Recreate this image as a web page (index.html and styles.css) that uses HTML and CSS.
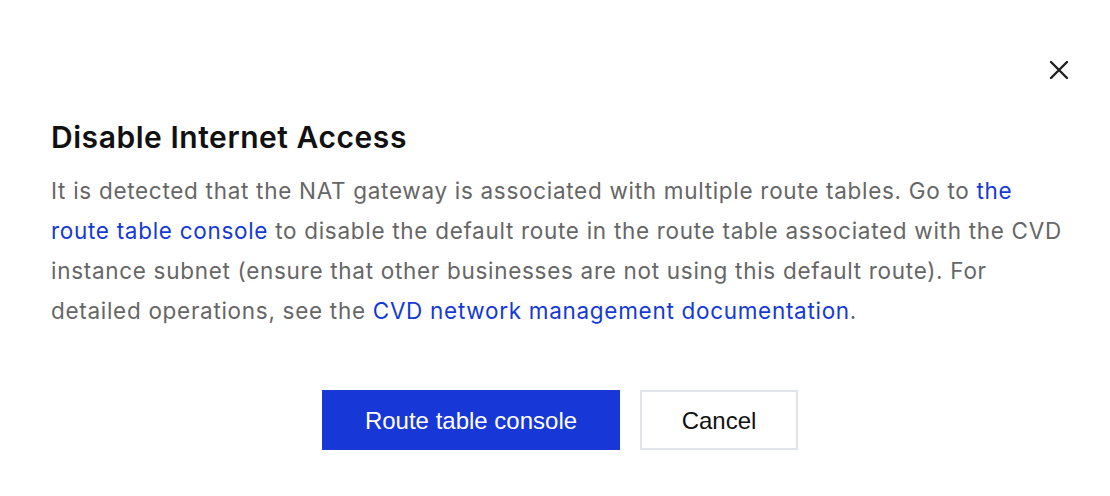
FILE: index.html
```html
<!DOCTYPE html>
<html>
<head>
<meta charset="utf-8">
<link rel="stylesheet" href="styles.css">
</head>
<body>
<div class="dialog">
  <div class="top">
    <button class="close" aria-label="close">
      <svg width="20" height="20" viewBox="0 0 20 20"><path d="M2 2L18 18M18 2L2 18" stroke="#1f1f1f" stroke-width="2.4" stroke-linecap="round"/></svg>
    </button>
  </div>
  <h1 class="title">Disable Internet Access</h1>
  <p class="body">It is detected that the NAT gateway is associated with multiple route tables. Go to <a class="link">the route table console</a> to disable the default route in the route table associated with the CVD instance subnet (ensure that other businesses are not using this default route). For detailed operations, see the <a class="link">CVD network management documentation</a>.</p>
  <div class="footer">
    <button class="btn primary">Route table console</button>
    <button class="btn secondary">Cancel</button>
  </div>
</div>
</body>
</html>
```
FILE: styles.css
```css
html, body { margin: 0; padding: 0; background: #fff; }
.dialog { width: 1110px; height: 496px; box-sizing: border-box; padding: 58px 41px 0 51px; font-family: Inter, "Noto Sans", sans-serif; }
.top { display: flex; justify-content: flex-end; height: 24px; }
.close { border: 0; background: none; padding: 0; width: 20px; height: 20px; margin-top: 2px; cursor: pointer; }
.title { margin: 35px 0 0 0; font-size: 30px; font-weight: 600; color: #111; line-height: 40px; letter-spacing: 0.55px; }
.body { margin: 14px 0 0 0; width: 1016px; font-size: 22.5px; line-height: 40px; color: #666; letter-spacing: 0.7px; }
.link { color: #1539d4; text-decoration: none; }
.footer { display: flex; justify-content: center; gap: 20px; margin-top: 59px; padding-left: 0; }
.btn { height: 60px; font-family: "Liberation Sans", Arial, sans-serif; font-size: 24px; box-sizing: border-box; cursor: pointer; padding-top: 2px; }
.primary { width: 298px; background: #1737d6; color: #fff; border: 0; }
.secondary { width: 158px; background: #fff; color: #111; border: 2px solid #e1e4ec; }
```
